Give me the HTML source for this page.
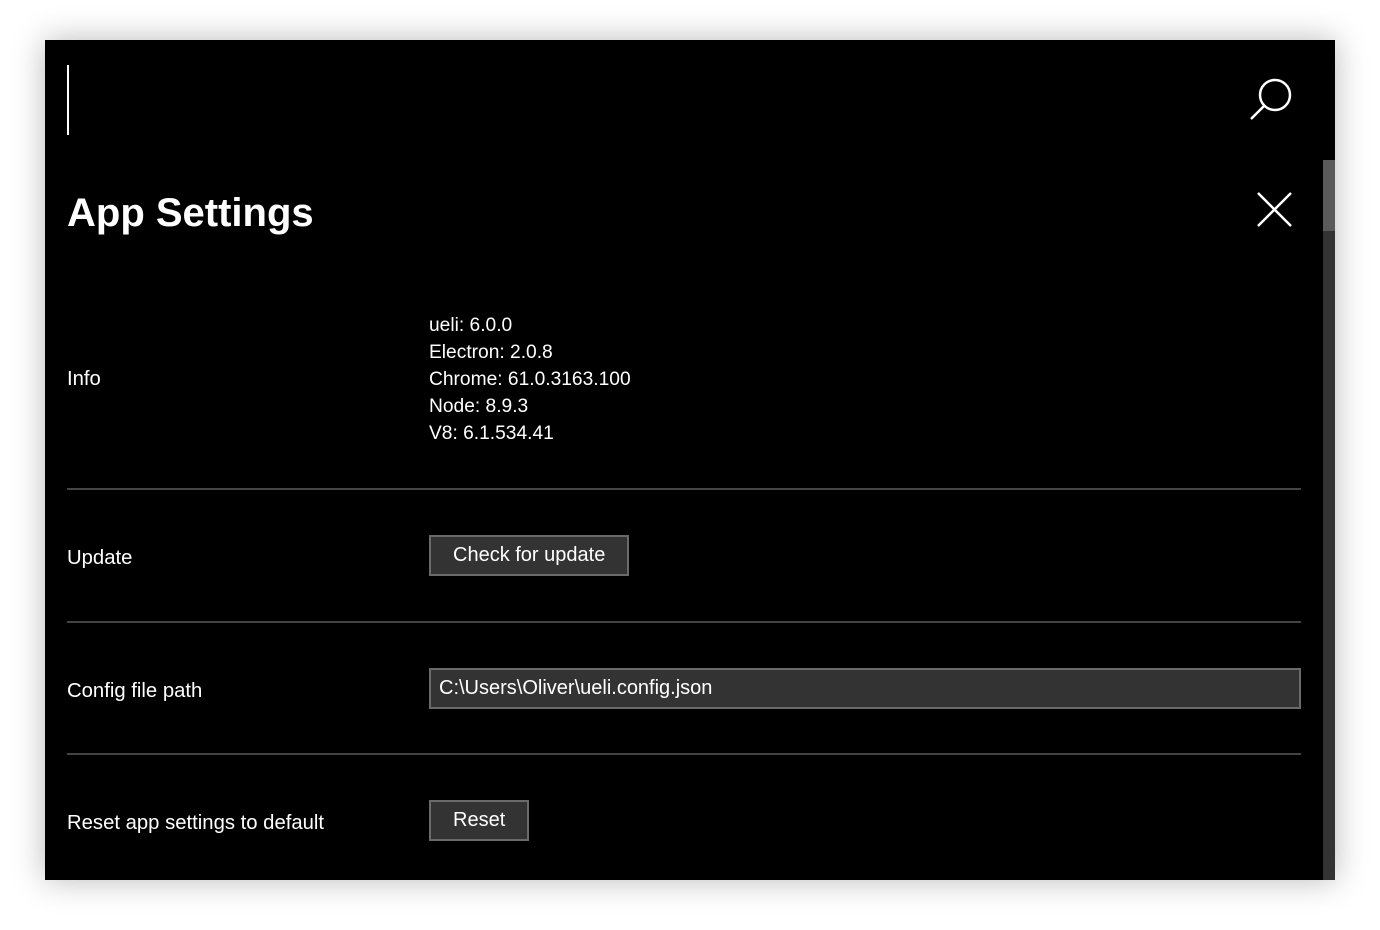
<!DOCTYPE html>
<html><head><style>
body{margin:0;width:1380px;height:930px;background:#fff;position:relative;overflow:hidden;font-family:"Liberation Sans",sans-serif}
.win{position:absolute;left:45px;top:40px;width:1290px;height:840px;background:#000;box-shadow:0 0 30px rgba(0,0,0,.28);overflow:hidden;color:#fff}
.cursor{position:absolute;left:22px;top:25px;width:2px;height:70px;background:#fff}
.t{position:absolute;font-size:19px;white-space:nowrap}
.l{font-size:20.3px}
.hr{position:absolute;left:22px;width:1234px;height:2px;background:#444}
.btn{position:absolute;background:#333;border:2px solid #6a6a6a;box-sizing:border-box;color:#fff;font-size:20px;padding-left:22px;line-height:36px}
</style></head><body>
<div class="win">
<div class="cursor"></div>
<svg style="position:absolute;left:1200px;top:35px" width="60" height="50"><circle cx="30" cy="20" r="15" stroke="#fff" stroke-width="2.5" fill="none"/><line x1="19" y1="31" x2="6" y2="44" stroke="#fff" stroke-width="2.5"/></svg>
<svg style="position:absolute;left:1210px;top:150px" width="40" height="40"><path d="M3 3L36 36M36 3L3 36" stroke="#fff" stroke-width="2.5"/></svg>
<div style="position:absolute;left:1278px;top:120px;width:12px;height:720px;background:#333"></div>
<div style="position:absolute;left:1278px;top:120px;width:12px;height:71px;background:#5a5a5a"></div>
<div class="t" style="left:22px;top:151px;font-size:40px;font-weight:bold">App Settings</div>
<div class="t l" style="left:22px;top:328px">Info</div>
<div class="t" style="left:384px;top:272px;line-height:27px;font-size:19.2px">ueli: 6.0.0<br>Electron: 2.0.8<br>Chrome: 61.0.3163.100<br>Node: 8.9.3<br>V8: 6.1.534.41</div>
<div class="hr" style="top:448px"></div>
<div class="t l" style="left:22px;top:507px">Update</div>
<div class="btn" style="left:384px;top:495px;width:200px;height:41px">Check for update</div>
<div class="hr" style="top:581px"></div>
<div class="t l" style="left:22px;top:640px">Config file path</div>
<div class="btn" style="left:384px;top:628px;width:872px;height:41px;padding-left:8px">C:\Users\Oliver\ueli.config.json</div>
<div class="hr" style="top:713px"></div>
<div class="t l" style="left:22px;top:772px">Reset app settings to default</div>
<div class="btn" style="left:384px;top:760px;width:100px;height:41px">Reset</div>
</div>
</body></html>
